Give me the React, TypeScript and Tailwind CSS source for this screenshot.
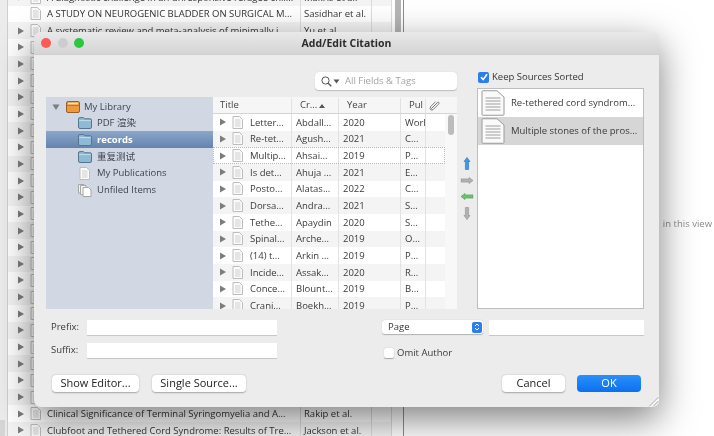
import React from "react";

const Tri = ({ down = false, className = "" }: { down?: boolean; className?: string }) => (
  <svg width="8" height="8" viewBox="0 0 8 8" className={`shrink-0 ${className}`}>
    {down ? <path d="M0.5 1.5H7.5L4 7Z" fill="#7d7d7d" /> : <path d="M1 0.5V7.5L7 4Z" fill="#7d7d7d" />}
  </svg>
);

const Doc = () => (
  <svg width="11" height="13" viewBox="0 0 11 13" className="shrink-0">
    <path d="M1 .5H7.5L10.5 3.5V12.5H1Z" fill="#fbfbfb" stroke="#bdbdbd" />
    <path d="M3 4H8.5M3 6H8.5M3 8H8.5M3 10H8.5" stroke="#cfcfcf" />
  </svg>
);

const BigDoc = () => (
  <svg width="24" height="26" viewBox="0 0 24 26" className="shrink-0">
    <path d="M1 1.5Q1 .75 1.75 .75H16L23 7V24.5Q23 25.25 22 25.25H2Q1 25.25 1 24.5Z" fill="#fafafa" stroke="#9a9a9a" />
    <path d="M4.5 8H19.5M4.5 11H19.5M4.5 14H19.5M4.5 17H19.5M4.5 20H19.5" stroke="#9e9e9e" />
  </svg>
);

const Folder = () => (
  <svg width="14" height="12" viewBox="0 0 14 12" className="shrink-0">
    <path d="M.5 2Q.5 .6 2 .6H5.5L6.6 1.8H12Q13.5 1.8 13.5 3V10Q13.5 11.5 12 11.5H2Q.5 11.5 .5 10Z" fill="#8fb9d4" stroke="#53778f" />
    <path d="M1 3.6H13" stroke="#c3dcea" />
  </svg>
);

const LibIcon = () => (
  <svg width="14" height="12" viewBox="0 0 14 12" className="shrink-0">
    <path d="M.5 2Q.5 .5 2 .5H12Q13.5 .5 13.5 2V10Q13.5 11.5 12 11.5H2Q.5 11.5 .5 10Z" fill="#ed9a3c" stroke="#96602a" />
    <path d="M2 2.5H12" stroke="#f7e5c8" strokeWidth="1.5" />
    <path d="M1 4.5H13" stroke="#b9742c" />
  </svg>
);

const Stacked = () => (
  <svg width="14" height="13" viewBox="0 0 14 13" className="shrink-0">
    <path d="M.5 .5H6V9H.5Z" fill="#f3f3f3" stroke="#a6a6a6" />
    <path d="M2.5 1.5H8V10.5H2.5Z" fill="#f7f7f7" stroke="#a6a6a6" />
    <path d="M5 3.5H10.5L13 6V12.5H5Z" fill="#ffffff" stroke="#a6a6a6" />
  </svg>
);

const Arrow = ({ dir, color, edge }: { dir: "up" | "down" | "left" | "right"; color: string; edge: string }) => {
  const rot = { up: 0, right: 90, down: 180, left: 270 }[dir];
  return (
    <svg width="12" height="13" viewBox="0 0 12 13" style={{ transform: `rotate(${rot}deg)` }}>
      <path d="M6 .5L9 4.5H7.6V12.5H4.4V4.5H3Z" fill={color} stroke={edge} strokeWidth=".6" />
    </svg>
  );
};

const bgTitles: Record<number, string> = {
  0: "A diagnostic challenge in an unresponsive refugee chil...",
  1: "A STUDY ON NEUROGENIC BLADDER ON SURGICAL M...",
  2: "A systematic review and meta-analysis of minimally i...",
  25: "Clinical Significance of Terminal Syringomyelia and A...",
  26: "Clubfoot and Tethered Cord Syndrome: Results of Tre...",
};
const bgAuthors: Record<number, string> = {
  0: "Makris et al.",
  1: "Sasidhar et al.",
  2: "Yu et al.",
  25: "Rakip et al.",
  26: "Jackson et al.",
};

const rows = [
  ["Letter...", "Abdall...", "2020", "Worl"],
  ["Re-tet...", "Agush...", "2021", "C..."],
  ["Multip...", "Ahsai...", "2019", "P..."],
  ["Is det...", "Ahuja ...", "2021", "E..."],
  ["Posto...", "Alatas...", "2022", "C..."],
  ["Dorsa...", "Andra...", "2021", "S..."],
  ["Tethe...", "Apaydin", "2020", "S..."],
  ["Spinal...", "Arche...", "2019", "O..."],
  ["(14) t...", "Arkin ...", "2019", "P..."],
  ["Incide...", "Assak...", "2020", "R..."],
  ["Conce...", "Blount...", "2019", "B..."],
  ["Crani...", "Boekh...", "2019", "P..."],
];

const Cell = ({ w, children, cls = "" }: { w: string; children?: React.ReactNode; cls?: string }) => (
  <div className={`${w} h-full flex items-center border-r border-[#e2e2e2] overflow-hidden whitespace-nowrap ${cls}`}>{children}</div>
);

const Btn = ({ w, children }: { w: string; children: React.ReactNode }) => (
  <div className={`${w} h-[17px] bg-white rounded-[4px] shadow-[0_0.5px_1.5px_rgba(0,0,0,0.3)] flex items-center justify-center text-[#222] text-[11px]`}>{children}</div>
);

export default function App() {
  return (
    <div className="relative w-[714px] h-[436px] overflow-hidden bg-white flex font-['Open_Sans','Noto_Sans_CJK_SC',sans-serif] text-[9.5px] text-[#3a3a3a] blur-[0.3px]">
      {/* background window */}
      <div className="w-[8px] bg-[#ececec] border-r border-[#cfcfcf] shrink-0 flex flex-col justify-end">
        <div className="w-[5px] h-[16px] bg-[#d6d6d6]" />
      </div>
      <div className="w-[383px] shrink-0 overflow-hidden">
        <div className="-mt-[11px]">
          {Array.from({ length: 27 }).map((_, i) => (
            <div key={i} className={`h-[16.67px] flex items-center ${i % 2 === 0 ? "bg-[#f4f4f4]" : "bg-white"}`}>
              <div className="w-[22px] flex justify-end pr-[5px]">{i !== 1 && <Tri />}</div>
              <Doc />
              <div className="w-[259px] pl-[6px] pt-[1px] whitespace-nowrap overflow-hidden text-[#333]">{bgTitles[i]}</div>
              <div className="w-[71px] pl-[3px] pt-[1px] border-l border-[#dcdcdc] h-full flex items-center whitespace-nowrap overflow-hidden text-[#333]">{bgAuthors[i]}</div>
              <div className="w-[20px] border-l border-[#dcdcdc] h-full" />
            </div>
          ))}
        </div>
      </div>
      <div className="w-[12px] shrink-0 border-l border-[#dcdcdc] flex justify-center">
        <div className="w-[6px] h-[200px] bg-[#b5b5b5]" />
      </div>
      <div className="flex-1 border-l border-[#8d8d8d] flex items-center justify-end pr-[2px] pt-[13px] text-[#8c8c8c]">in this view</div>

      {/* dialog */}
      <div className="absolute left-[34px] top-[32px] w-[625px] h-[375px] rounded-[7px] bg-[#ececec] flex flex-col shadow-[0_12px_36px_rgba(0,0,0,0.5)] overflow-hidden">
        <div className="h-[23px] shrink-0 relative flex items-center justify-center pt-[1px] bg-gradient-to-b from-[#e9e9e9] to-[#d4d4d4] border-b border-[#d0d0d0]">
          <div className="absolute left-[7px] top-[6px] flex gap-[6.5px]">
            <div className="w-[10px] h-[10px] rounded-full bg-[#fb5b54]" />
            <div className="w-[10px] h-[10px] rounded-full bg-[#cdcdcd]" />
            <div className="w-[10px] h-[10px] rounded-full bg-[#2ac73f]" />
          </div>
          <span className="font-bold text-[10.5px] text-[#2c2c2c]">Add/Edit Citation</span>
        </div>

        <div className="flex pl-[12px] pr-[15px] h-[254px] shrink-0">
          {/* left */}
          <div className="w-[411px] flex flex-col">
            <div className="h-[42px] pt-[17px] flex justify-end shrink-0">
              <div className="w-[142px] h-[18px] bg-white rounded-[4px] shadow-[0_0.5px_1px_rgba(0,0,0,0.2)] flex items-center pl-[6px] gap-[1px] text-[#a3a3a3]">
                <svg width="11" height="11" viewBox="0 0 11 11" className="shrink-0">
                  <circle cx="4.5" cy="4.5" r="3.6" fill="none" stroke="#555" strokeWidth="1" />
                  <path d="M7.2 7.2L10.3 10.3" stroke="#555" strokeWidth="1.3" />
                </svg>
                <svg width="7" height="5" viewBox="0 0 7 5" className="shrink-0 mr-[4px]"><path d="M.5.5H6.5L3.5 4.5Z" fill="#555" /></svg>
                <span>All Fields &amp; Tags</span>
              </div>
            </div>
            <div className="flex h-[212px] overflow-hidden">
              <div className="w-[167px] shrink-0 bg-[#d1d8e4] pt-[1px] text-[#3d4450]">
                <div className="h-[16.67px] flex items-center pl-[6px] pt-[1px]"><Tri down className="mr-[6px]" /><LibIcon /><span className="ml-[4px]">My Library</span></div>
                <div className="h-[16.67px] flex items-center pl-[32px] pt-[1px]"><Folder /><span className="ml-[5px]">PDF 渲染</span></div>
                <div className="h-[16.67px] flex items-center pl-[32px] pt-[1px] bg-gradient-to-b from-[#8ba6ca] to-[#6583ae] text-white font-bold"><Folder /><span className="ml-[5px]">records</span></div>
                <div className="h-[16.67px] flex items-center pl-[32px] pt-[1px]"><Folder /><span className="ml-[5px]">重复测试</span></div>
                <div className="h-[16.67px] flex items-center pl-[33px] pt-[1px]"><Doc /><span className="ml-[7px]">My Publications</span></div>
                <div className="h-[16.67px] flex items-center pl-[32px] pt-[1px]"><Stacked /><span className="ml-[5px]">Unfiled Items</span></div>
              </div>
              <div className="flex-1 min-w-0 flex flex-col bg-white">
                <div className="h-[17px] flex shrink-0 bg-[#f6f6f6] border-b border-[#d4d4d4] text-[#444] pt-[1px]">
                  <Cell w="w-[79px]" cls="pl-[7px]">Title</Cell>
                  <Cell w="w-[47px]" cls="pl-[8px]">Cr...<svg width="6" height="4" viewBox="0 0 6 4" className="ml-[2px]"><path d="M0 4H6L3 0Z" fill="#555" /></svg></Cell>
                  <Cell w="w-[62px]" cls="pl-[8px]">Year</Cell>
                  <Cell w="w-[25px]" cls="pl-[8px]">Pul</Cell>
                  <div className="flex-1 flex items-center pl-[3px]">
                    <svg width="11" height="11" viewBox="0 0 10 10"><path d="M2 8L7.5 2.5Q8.5 1.5 9 2.2T8.5 4L3.7 8.8Q2.5 9.5 1.5 8.8T1.5 6L6 1.5" fill="none" stroke="#777" strokeWidth=".9" /></svg>
                  </div>
                </div>
                <div className="flex-1 min-h-0 flex">
                  <div className="flex-1 min-w-0 overflow-hidden">
                    {rows.map((r, i) => (
                      <div key={i} className={`h-[16.67px] flex items-center text-[#3a3a3a] ${i === 2 ? "outline-1 -outline-offset-1 outline-dotted outline-[#9fbce6] bg-white" : i % 2 === 1 ? "bg-[#f4f4f4]" : "bg-white"}`}>
                        <Cell w="w-[79px]" cls="pl-[6px]"><Tri /><span className="ml-[5px] flex"><Doc /></span><span className="ml-[7px] pt-[1px]">{r[0]}</span></Cell>
                        <Cell w="w-[47px]" cls="pl-[4px] pt-[1px]">{r[1]}</Cell>
                        <Cell w="w-[62px]" cls="pl-[4px] pt-[1px]">{r[2]}</Cell>
                        <Cell w="w-[25px]" cls="pl-[4px] pt-[1px]">{r[3]}</Cell>
                      </div>
                    ))}
                  </div>
                  <div className="w-[12px] shrink-0 bg-[#f8f8f8] pt-[1px] flex justify-center">
                    <div className="w-[6px] h-[20px] rounded-full bg-[#bcbcbc]" />
                  </div>
                </div>
              </div>
            </div>
          </div>

          {/* arrows */}
          <div className="w-[20px] shrink-0 flex flex-col items-center pt-[102px] gap-[3.6px]">
            <Arrow dir="up" color="#3d97e8" edge="#2a74bf" />
            <Arrow dir="right" color="#b2b2b2" edge="#8f8f8f" />
            <Arrow dir="left" color="#6cc26f" edge="#4a9a50" />
            <Arrow dir="down" color="#b2b2b2" edge="#8f8f8f" />
          </div>

          {/* right */}
          <div className="w-[167px] shrink-0 flex flex-col">
            <div className="h-[33px] pt-[11px] pl-[1px] flex items-center gap-[3px] shrink-0">
              <div className="w-[11px] h-[11px] rounded-[2px] bg-[#2c7ee8] flex items-center justify-center">
                <svg width="8" height="8" viewBox="0 0 8 8"><path d="M1 4.2L3.2 6.6L7 1.2" fill="none" stroke="#fff" strokeWidth="1.6" /></svg>
              </div>
              <span className="text-[#333]">Keep Sources Sorted</span>
            </div>
            <div className="h-[221px] bg-white border border-[#bdbdbd]">
              <div className="h-[28px] flex items-center pl-[3px] gap-[6px] whitespace-nowrap overflow-hidden"><BigDoc /><span>Re-tethered cord syndrom...</span></div>
              <div className="h-[28px] flex items-center pl-[3px] gap-[6px] whitespace-nowrap overflow-hidden bg-[#d6d6d6]"><BigDoc /><span>Multiple stones of the pros...</span></div>
            </div>
          </div>
        </div>

        {/* locator form */}
        <div className="flex pl-[17px] pr-[15px] pt-[10px] shrink-0 h-[62px]">
          <div className="w-[226px] flex flex-col gap-[7px]">
            <div className="flex items-center h-[16px]"><span className="w-[36px] pt-[1px]">Prefix:</span><div className="w-[190px] h-[15px] bg-white shadow-[0_0.5px_0.5px_rgba(0,0,0,0.15)]" /></div>
            <div className="flex items-center h-[16px]"><span className="w-[36px] pt-[1px]">Suffix:</span><div className="w-[190px] h-[15px] bg-white shadow-[0_0.5px_0.5px_rgba(0,0,0,0.15)]" /></div>
          </div>
          <div className="ml-[105px] w-[262px] flex flex-col">
            <div className="flex h-[16px] items-center">
              <div className="w-[101px] h-[14px] bg-white rounded-[3px] shadow-[0_0.5px_1px_rgba(0,0,0,0.25)] flex items-center justify-between pl-[6px] pr-[1px] text-[#333]">
                <span className="pt-[1px]">Page</span>
                <div className="w-[10px] h-[11px] rounded-[2px] bg-[#2c7ee8] flex items-center justify-center">
                  <svg width="6" height="8" viewBox="0 0 6 8"><path d="M1 3L3 1L5 3M1 5L3 7L5 5" fill="none" stroke="#fff" strokeWidth="1" /></svg>
                </div>
              </div>
              <div className="ml-[6px] w-[155px] h-[15px] bg-white shadow-[0_0.5px_0.5px_rgba(0,0,0,0.15)]" />
            </div>
            <div className="mt-[11px] flex items-center pl-[2px] gap-[3px]">
              <div className="w-[10px] h-[10px] rounded-[2px] bg-white shadow-[0_0.5px_1px_rgba(0,0,0,0.3)]" />
              <span>Omit Author</span>
            </div>
          </div>
        </div>

        {/* buttons */}
        <div className="flex items-start pl-[18px] pr-[18px] pt-[4px] relative flex-1">
          <Btn w="w-[87px]">Show Editor...</Btn>
          <div className="ml-[13px]"><Btn w="w-[94px]">Single Source...</Btn></div>
          <div className="ml-auto"><Btn w="w-[63px]">Cancel</Btn></div>
          <div className="ml-[12px] w-[64px] h-[17px] rounded-[4px] bg-gradient-to-b from-[#2a8ffb] to-[#0a70f0] text-white text-[11px] flex items-center justify-center">OK</div>
          <svg width="12" height="12" viewBox="0 0 12 12" className="absolute right-0 bottom-0">
            <path d="M12 0V12H0Z" fill="#f7f7f7" />
            <path d="M2 11.5L11.5 2M6 11.5L11.5 6" stroke="#8a8a8a" strokeWidth=".8" />
          </svg>
        </div>
      </div>
    </div>
  );
}
